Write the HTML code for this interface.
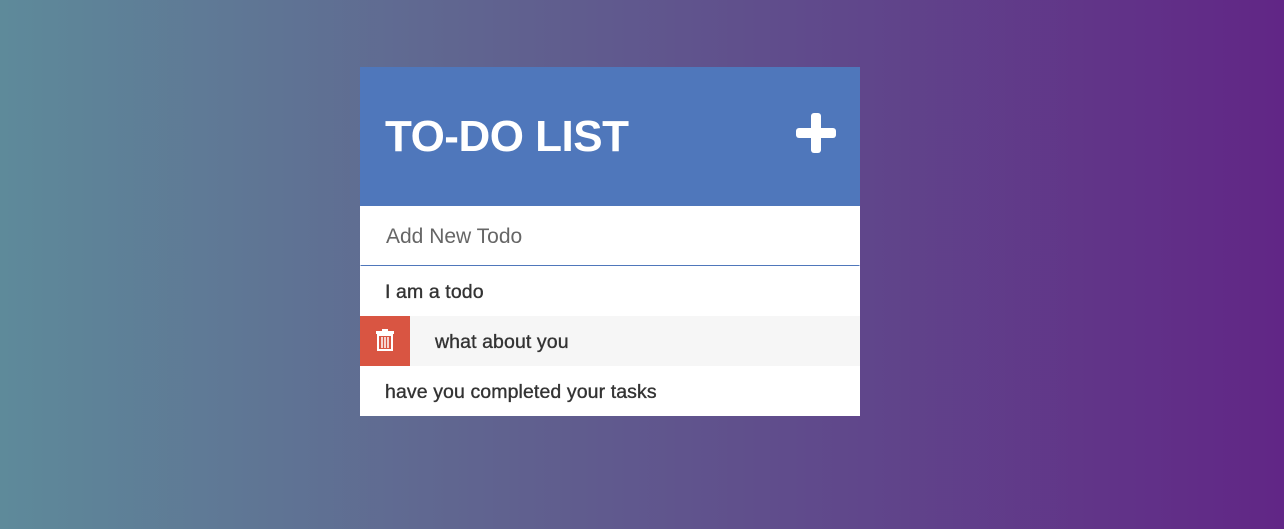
<!DOCTYPE html>
<html><head><style>
html,body{margin:0;padding:0}
body{width:1284px;height:529px;overflow:hidden;background:linear-gradient(90deg,#5e8a9a 0%,#60618f 40%,#612686 100%);font-family:"Liberation Sans",sans-serif;position:relative}
.box{position:absolute;left:360px;top:67px;width:500px;background:#fff}
.hd{height:139px;background:#4f77bb;position:relative}
.hd h1{margin:0;position:absolute;left:25px;top:45px;color:#fff;font-size:44px;font-weight:bold;letter-spacing:-0.5px;line-height:50px}
.plus{position:absolute;left:436px;top:46px;width:40px;height:40px}
.plus:before,.plus:after{content:"";position:absolute;background:#fff;border-radius:3px}
.plus:before{left:15px;top:0;width:10px;height:40px}
.plus:after{left:0;top:15px;width:40px;height:10px}
.in{height:59px;border:1px solid #4f77bb;border-top:none;border-left-color:#fff;border-right-color:#fff;position:relative}
.in span{position:absolute;left:25px;top:19px;font-size:21px;color:#666}
.row{height:50px;line-height:52px;font-size:19.5px;color:#333;padding-left:25px;position:relative;-webkit-text-stroke:0.35px #333;letter-spacing:0.1px}
.row.g{background:#f6f6f6;padding-left:75px}
.del{position:absolute;left:0;top:0;width:50px;height:50px;background:#d95542}
</style></head><body>
<div class="box">
<div class="hd"><h1>TO-DO LIST</h1><div class="plus"></div></div>
<div class="in"><span>Add New Todo</span></div>
<div class="row">I am a todo</div>
<div class="row g"><div class="del"><svg width="50" height="50" viewBox="0 0 50 50"><rect x="16" y="15" width="18" height="3" fill="#fff"/><rect x="22" y="13" width="6" height="3" fill="#fff"/><path d="M18 19h14v15h-14z" fill="none" stroke="#fff" stroke-width="2"/><path d="M22 21v11M25 21v11M28 21v11" stroke="#fff" stroke-width="1.5"/></svg></div>what about you</div>
<div class="row">have you completed your tasks</div>
</div>
</body></html>
